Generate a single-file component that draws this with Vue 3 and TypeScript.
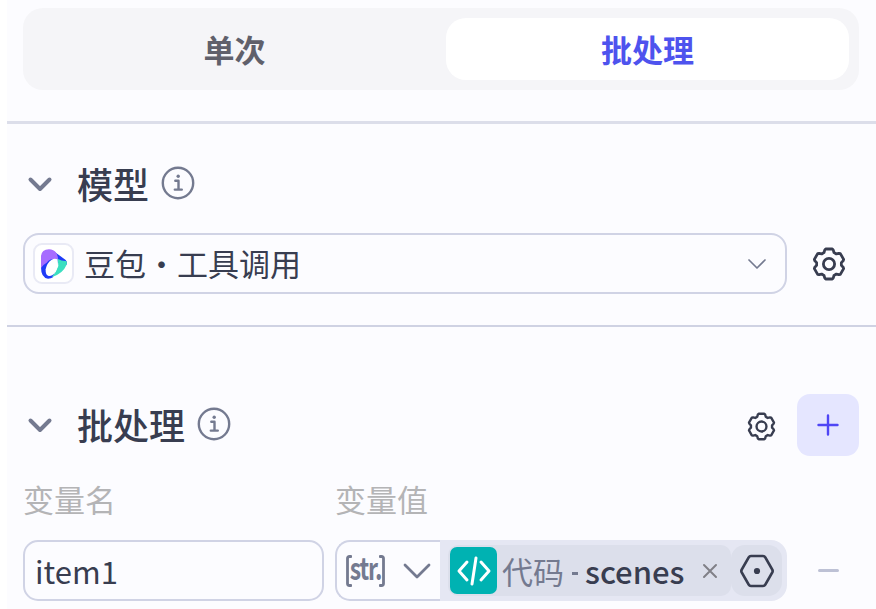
<script setup lang="ts">
import { ref } from 'vue'

type Mode = 'single' | 'batch'

const modes: { key: Mode; label: string }[] = [
  { key: 'single', label: '单次' },
  { key: 'batch', label: '批处理' },
]
const mode = ref<Mode>('batch')
const name = ref('item1')

// Six-toothed gear outline, one tooth repeated every 60 degrees.
const tooth: [number, number][] = [
  [-6.2, -10.7],
  [-5, -11.4],
  [-4.3, -13.9],
  [-3.3, -15],
  [3.3, -15],
  [4.3, -13.9],
  [5, -11.4],
]
const points: string[] = []
for (let i = 0; i < 6; i++) {
  const a = (i * Math.PI) / 3
  for (const [x, y] of tooth) {
    const px = x * Math.cos(a) - y * Math.sin(a)
    const py = x * Math.sin(a) + y * Math.cos(a)
    points.push(`${px.toFixed(2)} ${py.toFixed(2)}`)
  }
}
const gear = `M${points.join('L')}Z`
</script>

<template>
  <main class="panel">
    <section class="top">
      <div class="tabs">
        <button
          v-for="m in modes"
          :key="m.key"
          class="tab"
          :class="{ active: mode === m.key }"
          @click="mode = m.key"
        >
          {{ m.label }}
        </button>
      </div>
    </section>

    <section class="model">
      <header class="head">
        <svg class="fold" viewBox="0 0 26 16"><path d="M3.5 3.5l9.5 9.5 9.5-9.5" /></svg>
        <h2>模型</h2>
        <svg class="info" viewBox="0 0 34 34">
          <circle cx="17" cy="17" r="15.2" />
          <path d="M14.3 14.8h3.2v8.2M13.8 23.6h7" />
          <circle class="dot" cx="17.2" cy="10.2" r="1.7" />
        </svg>
      </header>
      <div class="model-row">
        <div class="select">
          <span class="logo">
            <svg viewBox="31 20 84 96">
              <path fill="#1f3bf7" d="M34 78Q34 40 75 32Q92 44 108 56Q114 62 111 70L84 64 70 108Q64 112 55 112Q34 110 34 78Z" />
              <path fill="#a66cff" d="M34 80V44Q36 25 58 24Q72 24 80 35Q86 46 85 58Q66 46 51 64Q40 70 34 80Z" />
              <path fill="#3bdfc0" d="M83 52Q98 60 110 59Q114 64 110 72Q100 97 66 108Q80 92 86 74Q86 62 83 52Z" />
              <path fill="#fff" d="M66 55Q75 50 83 54Q89 72 77 92Q69 105 57 104Q47 102 48 84Q51 65 66 55Z" />
            </svg>
          </span>
          <span class="model-name">豆包・工具调用</span>
          <svg class="caret" viewBox="0 0 20 12"><path d="M2 2l8 8 8-8" /></svg>
        </div>
        <svg class="gear large" viewBox="-17 -17 34 34"><path :d="gear" /><circle r="5.6" /></svg>
      </div>
    </section>

    <section class="batch">
      <header class="head">
        <svg class="fold" viewBox="0 0 26 16"><path d="M3.5 3.5l9.5 9.5 9.5-9.5" /></svg>
        <h2>批处理</h2>
        <svg class="info" viewBox="0 0 34 34">
          <circle cx="17" cy="17" r="15.2" />
          <path d="M14.3 14.8h3.2v8.2M13.8 23.6h7" />
          <circle class="dot" cx="17.2" cy="10.2" r="1.7" />
        </svg>
        <svg class="gear small" viewBox="-17 -17 34 34"><path :d="gear" /><circle r="5.8" /></svg>
        <button class="add">
          <svg viewBox="0 0 22 22"><path d="M11 1.5v19M1.5 11h19" /></svg>
        </button>
      </header>
      <div class="labels">
        <span>变量名</span>
        <span>变量值</span>
      </div>
      <div class="fields">
        <input v-model="name" class="name" />
        <div class="value">
          <div class="type">
            <span class="str">
              <svg viewBox="0 0 6 32"><path d="M5 1.5H3.5Q1.5 1.5 1.5 3.5V28.5Q1.5 30.5 3.5 30.5H5" /></svg>
              <span class="str-text">str.</span>
              <svg viewBox="0 0 6 32"><path d="M1 1.5H2.5Q4.5 1.5 4.5 3.5V28.5Q4.5 30.5 2.5 30.5H1" /></svg>
            </span>
            <svg class="type-caret" viewBox="0 0 28 18"><path d="M2 3l12 12L26 3" /></svg>
          </div>
          <div class="refbox">
            <div class="chip">
              <span class="code">
                <svg viewBox="0 0 36 30"><path d="M11 6L3 15l8 9M20 2l-4 26M25 6l8 9-8 9" /></svg>
              </span>
              <span class="source">代码</span>
              <span class="dash"></span>
              <span class="field">scenes</span>
              <svg class="close" viewBox="0 0 16 16"><path d="M2 2l12 12M14 2l-12 12" /></svg>
            </div>
            <div class="hex">
              <svg viewBox="0 0 36 34">
                <path d="M12 2h12q1.5 0 2.3 1.4l7 12.2q.7 1.4 0 2.8l-7 12.2q-.8 1.4-2.3 1.4H12q-1.5 0-2.3-1.4l-7-12.2q-.7-1.4 0-2.8l7-12.2q.8-1.4 2.3-1.4z" />
                <circle cx="18" cy="17" r="3.1" />
              </svg>
            </div>
          </div>
        </div>
        <span class="remove"></span>
      </div>
    </section>
  </main>
</template>

<style>
body {
  background: #fff;
  overflow: hidden;
}
</style>

<style scoped>
* {
  box-sizing: border-box;
}
.panel {
  width: 869px;
  height: 609px;
  margin-left: 7px;
  overflow: hidden;
  background: #fcfcff;
  color: #383d50;
  font-family: "Noto Sans CJK SC", sans-serif;
}
svg {
  display: block;
  flex: none;
  fill: none;
  stroke: currentColor;
  stroke-linecap: round;
  stroke-linejoin: round;
}
button {
  border: 0;
  padding: 0;
  font-family: inherit;
}
.top {
  height: 124px;
  padding: 8px 17px 0 16px;
  border-bottom: 3px solid #dcdeea;
}
.tabs {
  display: flex;
  height: 82px;
  padding: 10px;
  gap: 10px;
  border-radius: 20px;
  background: #f5f5f8;
}
.tab {
  flex: 1;
  border-radius: 20px;
  background: transparent;
  color: #60606b;
  font-size: 31px;
  font-weight: 700;
  line-height: 62px;
}
.tab.active {
  background: #fff;
  color: #4e53ee;
}
.model {
  height: 203px;
  padding: 36px 16px 0;
  border-bottom: 2px solid #cfd2e3;
}
.head {
  display: flex;
  align-items: center;
  height: 48px;
}
.fold {
  width: 26px;
  height: 16px;
  margin-left: 4px;
  color: #747a90;
  stroke-width: 4;
}
h2 {
  margin: -3px 12px 0 24px;
  font-size: 36px;
  font-weight: 500;
  line-height: 48px;
}
.info {
  width: 34px;
  height: 34px;
  margin-top: -3px;
  color: #747a90;
  stroke-width: 2.4;
}
.dot {
  fill: currentColor;
  stroke: none;
}
.model-row {
  display: flex;
  align-items: center;
  margin-top: 25px;
}
.select {
  display: flex;
  align-items: center;
  width: 764px;
  height: 61px;
  padding: 0 18px 0 8px;
  border: 2px solid #d0d3e5;
  border-radius: 16px;
}
.logo {
  display: grid;
  place-items: center;
  width: 41px;
  height: 41px;
  border: 2px solid #e9eaf5;
  border-radius: 9px;
  background: #fff;
}
.logo svg {
  width: 28px;
  height: 32px;
  stroke: none;
}
.model-name {
  margin-left: 10px;
  margin-top: -2px;
  font-size: 31px;
  line-height: 40px;
}
.caret {
  width: 20px;
  height: 12px;
  margin-left: auto;
  color: #747a90;
  stroke-width: 1.7;
}
.gear {
  stroke-width: 2.8;
}
.large {
  width: 34px;
  height: 34px;
  margin-left: 25px;
}
.small {
  width: 29px;
  height: 29px;
  margin-left: auto;
  margin-right: 21.5px;
  margin-top: 2px;
}
.batch {
  padding: 67px 17px 0 16px;
}
.batch .head {
  height: 62px;
}
.add {
  display: grid;
  place-items: center;
  width: 62px;
  height: 62px;
  border-radius: 13px;
  background: #e5e6ff;
  color: #4f46f5;
}
.add svg {
  width: 22px;
  height: 22px;
  stroke-width: 2.4;
}
.labels {
  display: grid;
  grid-template-columns: 312px 1fr;
  margin-top: 23px;
  color: #b4b4b6;
  font-size: 31px;
  line-height: 40px;
}
.fields {
  display: flex;
  align-items: center;
  margin-top: 21px;
}
.name {
  width: 301px;
  height: 61px;
  padding: 0 10px;
  border: 2px solid #d0d3e5;
  border-radius: 15px;
  outline: 0;
  background: transparent;
  color: inherit;
  font: 31px "Noto Sans CJK SC", sans-serif;
}
.value {
  display: flex;
  width: 452px;
  height: 61px;
  margin-left: 11px;
}
.type {
  display: flex;
  align-items: center;
  width: 105px;
  padding-left: 9px;
  border: 2px solid #d0d3e5;
  border-right: 0;
  border-radius: 15px 0 0 15px;
  color: #747a90;
}
.str {
  display: flex;
  align-items: center;
  width: 39px;
}
.str svg {
  width: 6px;
  height: 32px;
  stroke-width: 2.8;
}
.str-text {
  display: flex;
  justify-content: center;
  width: 27px;
  margin-top: -7px;
  font-size: 31px;
  font-weight: 700;
  line-height: 30px;
  letter-spacing: -1.5px;
  transform: scaleX(0.74);
}
.type-caret {
  width: 28px;
  height: 18px;
  margin-left: 18px;
  stroke-width: 2.8;
}
.refbox {
  display: flex;
  flex: 1;
  padding: 5px 4px 5px 8px;
  border-radius: 0 16px 16px 0;
  background: #e5e7f3;
}
.chip {
  display: flex;
  align-items: center;
  width: 283px;
  border-radius: 10px;
  background: #dcdfeb;
  font-size: 31px;
  line-height: 40px;
}
.code {
  display: grid;
  place-items: center;
  width: 47px;
  height: 47px;
  margin-left: 2px;
  border-radius: 7px;
  background: #00b2b2;
  color: #fff;
}
.code svg {
  width: 36px;
  height: 30px;
  stroke-width: 3;
}
.source {
  margin-left: 5px;
  color: #747a90;
}
.dash {
  width: 6px;
  height: 3px;
  margin: 6px 7px 0 8px;
  background: #747a90;
}
.field {
  font-weight: 500;
}
.close {
  width: 16px;
  height: 16px;
  margin-left: 18px;
  color: #808087;
  stroke-width: 2;
}
.hex {
  display: grid;
  place-items: center;
  width: 51px;
  border-radius: 14px;
  background: #dcdfeb;
}
.hex svg {
  width: 36px;
  height: 34px;
  stroke-width: 2.7;
}
.hex circle {
  fill: currentColor;
  stroke: none;
}
.remove {
  width: 21px;
  height: 3px;
  margin-left: 31px;
  border-radius: 2px;
  background: #bdc1d5;
}
</style>
